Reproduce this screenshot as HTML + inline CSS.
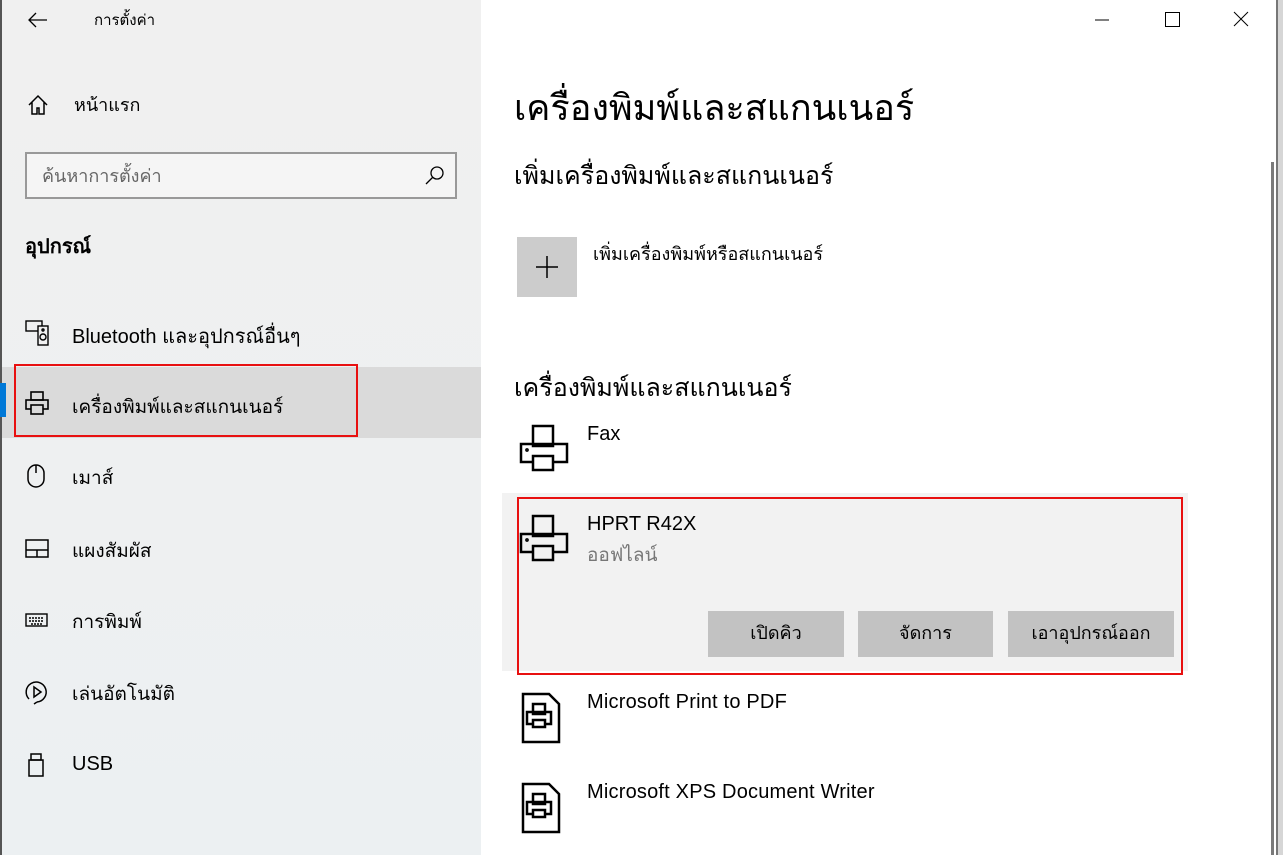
<!DOCTYPE html>
<html><head><meta charset="utf-8"><style>
*{margin:0;padding:0;box-sizing:border-box}
body{width:1283px;height:855px;overflow:hidden;position:relative;font-family:"Liberation Sans","DejaVu Sans",sans-serif;color:#000;background:#fff}
.abs{position:absolute}
.t{position:absolute;white-space:nowrap}
.nav{font-size:19px}
svg{position:absolute;fill:none;stroke:#000}
</style></head><body>
<div class="abs" style="left:0;top:0;width:481px;height:855px;background:linear-gradient(180deg,#f0f0f0 0%,#eef0f1 60%,#ecf0f2 100%);border-left:2px solid #555"></div>
<div class="abs" style="left:2px;top:367px;width:479px;height:71px;background:#dadada"></div>
<div class="abs" style="left:0;top:383px;width:6px;height:34px;background:#0078d7"></div>
<div class="abs" style="left:14px;top:364px;width:344px;height:73px;border:2px solid #e81010"></div>
<svg style="left:27px;top:11px" width="22" height="18" stroke-width="1.3"><path d="M20 9H2M9 2L2 9l7 7"/></svg>
<div class="t" style="left:94px;top:8px;font-size:15px">การตั้งค่า</div>
<svg style="left:27px;top:94px" width="22" height="22" stroke-width="1.5"><path d="M2 11L11 2l9 9M5 8v12h5v-6h2v6h5V8"/></svg>
<div class="t nav" style="left:74px;top:90px;font-size:18px">หน้าแรก</div>
<div class="abs" style="left:25px;top:152px;width:432px;height:47px;border:2px solid #999;background:#f5f5f5"></div>
<div class="t" style="left:42px;top:161px;font-size:18px;color:#666">ค้นหาการตั้งค่า</div>
<svg style="left:424px;top:164px" width="22" height="22" stroke-width="1.3"><circle cx="13" cy="9" r="6"/><path d="M9 13l-7 7"/></svg>
<div class="t" style="left:25px;top:230px;font-size:20px;font-weight:bold">อุปกรณ์</div>
<svg style="left:25px;top:320px" width="26" height="26" stroke-width="1.4"><rect x="1" y="1" width="16" height="10"/><rect x="13" y="6" width="10" height="19" fill="#f0f0f0"/><circle cx="18" cy="17" r="3"/><circle cx="18" cy="10" r="1"/></svg>
<div class="t nav" style="left:72px;top:320px;font-size:20px">Bluetooth และอุปกรณ์อื่นๆ</div>
<svg style="left:24px;top:391px" width="26" height="26" stroke-width="1.6"><rect x="7" y="1" width="12" height="8"/><rect x="2" y="9" width="22" height="9"/><rect x="7" y="14" width="12" height="9" fill="#dadada"/></svg>
<div class="t nav" style="left:72px;top:392px">เครื่องพิมพ์และสแกนเนอร์</div>
<svg style="left:26px;top:463px" width="22" height="26" stroke-width="1.5"><rect x="2" y="2" width="16" height="22" rx="8"/><path d="M10 2v8"/></svg>
<div class="t nav" style="left:72px;top:463px">เมาส์</div>
<svg style="left:24px;top:538px" width="26" height="22" stroke-width="1.5"><rect x="2" y="2" width="22" height="17"/><path d="M2 12h22M13 12v7"/></svg>
<div class="t nav" style="left:72px;top:536px">แผงสัมผัส</div>
<svg style="left:24px;top:612px" width="26" height="18" stroke-width="1.4"><rect x="2" y="2" width="21" height="12"/><path d="M5 6h15M5 9h15M7 12h11" stroke-dasharray="2 1"/></svg>
<div class="t nav" style="left:72px;top:607px">การพิมพ์</div>
<svg style="left:24px;top:679px" width="26" height="28" stroke-width="1.5"><path d="M5 20A10 10 0 1 1 13 23"/><path d="M10 8l7 5-7 5z"/><path d="M13 23l-3 2"/></svg>
<div class="t nav" style="left:72px;top:679px">เล่นอัตโนมัติ</div>
<svg style="left:27px;top:752px" width="20" height="26" stroke-width="1.5"><rect x="4" y="2" width="10" height="6"/><rect x="2" y="8" width="14" height="16"/></svg>
<div class="t nav" style="left:72px;top:753px;font-size:20px">USB</div>

<svg style="left:1093px;top:18px" width="20" height="4" stroke-width="1"><path d="M2 2h14"/></svg>
<svg style="left:1164px;top:11px" width="18" height="18" stroke-width="1"><rect x="1.5" y="1.5" width="14" height="14"/></svg>
<svg style="left:1232px;top:10px" width="18" height="18" stroke-width="1"><path d="M2 2l14 14M16 2L2 16"/></svg>
<div class="abs" style="left:1276px;top:0;width:7px;height:855px;background:#d6d6d6;border-left:2px solid #777"></div>
<div class="abs" style="left:1271px;top:162px;width:3px;height:693px;background:#7a7a7a"></div>

<div class="t" style="left:514px;top:79px;font-size:36px">เครื่องพิมพ์และสแกนเนอร์</div>
<div class="t" style="left:514px;top:156px;font-size:25px">เพิ่มเครื่องพิมพ์และสแกนเนอร์</div>
<div class="abs" style="left:517px;top:237px;width:60px;height:60px;background:#ccc"></div>
<svg style="left:535px;top:255px" width="24" height="24" stroke-width="1.5"><path d="M12 1v22M1 12h22"/></svg>
<div class="t" style="left:593px;top:239px;font-size:18px">เพิ่มเครื่องพิมพ์หรือสแกนเนอร์</div>
<div class="t" style="left:514px;top:368px;font-size:25px">เครื่องพิมพ์และสแกนเนอร์</div>

<svg style="left:519px;top:424px" width="50" height="50" stroke-width="2.5"><rect x="14" y="2" width="20" height="20"/><rect x="2" y="20" width="46" height="18"/><rect x="14" y="32" width="20" height="14" fill="#fff"/><circle cx="8" cy="26" r="0.6" fill="#000"/></svg>
<div class="t" style="left:587px;top:423px;font-size:20px">Fax</div>

<div class="abs" style="left:502px;top:493px;width:686px;height:178px;background:#f2f2f2"></div>
<div class="abs" style="left:517px;top:497px;width:666px;height:178px;border:2px solid #e81010"></div>
<svg style="left:519px;top:514px" width="50" height="50" stroke-width="2.5"><rect x="14" y="2" width="20" height="20"/><rect x="2" y="20" width="46" height="18"/><rect x="14" y="32" width="20" height="14" fill="#f2f2f2"/><circle cx="8" cy="26" r="0.6" fill="#000"/></svg>
<div class="t" style="left:587px;top:513px;font-size:20px">HPRT R42X</div>
<div class="t" style="left:587px;top:540px;font-size:19px;color:#777">ออฟไลน์</div>
<div class="abs" style="left:708px;top:611px;width:136px;height:46px;background:#c2c2c2;font-size:18px;text-align:center;line-height:44px">เปิดคิว</div>
<div class="abs" style="left:858px;top:611px;width:135px;height:46px;background:#c2c2c2;font-size:18px;text-align:center;line-height:44px">จัดการ</div>
<div class="abs" style="left:1008px;top:611px;width:166px;height:46px;background:#c2c2c2;font-size:18px;text-align:center;line-height:44px">เอาอุปกรณ์ออก</div>

<svg style="left:521px;top:692px" width="42" height="52" stroke-width="2.5"><path d="M2 2h26l10 10v38H2z"/><rect x="12" y="12" width="12" height="10"/><rect x="6" y="20" width="24" height="12"/><rect x="12" y="28" width="12" height="7" fill="#fff"/></svg>
<div class="t" style="left:587px;top:691px;font-size:20px;letter-spacing:0.2px">Microsoft Print to PDF</div>
<svg style="left:521px;top:782px" width="42" height="52" stroke-width="2.5"><path d="M2 2h26l10 10v38H2z"/><rect x="12" y="12" width="12" height="10"/><rect x="6" y="20" width="24" height="12"/><rect x="12" y="28" width="12" height="7" fill="#fff"/></svg>
<div class="t" style="left:587px;top:781px;font-size:20px;letter-spacing:0.2px">Microsoft XPS Document Writer</div>
</body></html>
